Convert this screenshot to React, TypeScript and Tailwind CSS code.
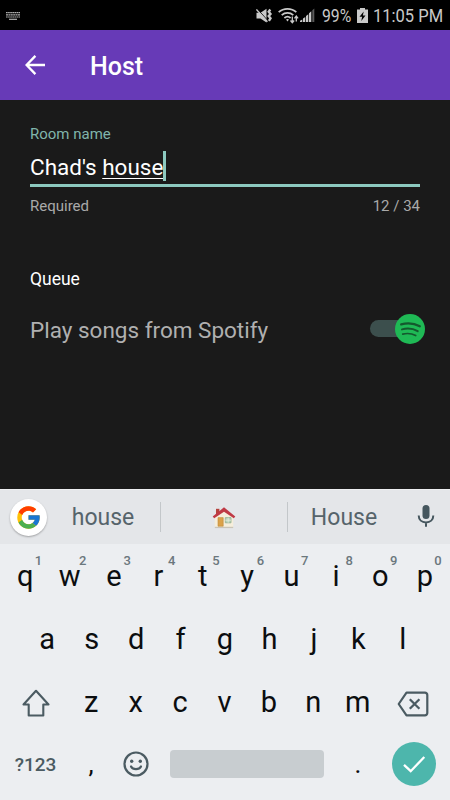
import React from 'react';
import { FcGoogle } from 'react-icons/fc';

const topRow = [
  ['q', '1'], ['w', '2'], ['e', '3'], ['r', '4'], ['t', '5'],
  ['y', '6'], ['u', '7'], ['i', '8'], ['o', '9'], ['p', '0'],
];
const homeRow = ['a', 's', 'd', 'f', 'g', 'h', 'j', 'k', 'l'];
const bottomRow = ['z', 'x', 'c', 'v', 'b', 'n', 'm'];

const StatusBar = () => {
  return (
    <div className="flex h-[30px] shrink-0 items-center justify-between bg-black pl-[6px] pr-[8px] text-[#c9c9c9]">
      <svg className="mt-[1px]" width="14" height="8" viewBox="0 0 14 8" fill="none" stroke="#b0b0b0">
        <path d="M0 .7h14" strokeDasharray="1.7 .4" strokeWidth="1.2" />
        <path d="M0 2.9h14" strokeDasharray="2 .4" strokeWidth="1.1" />
        <path d="M0 5h14" strokeDasharray="1.7 .4" strokeWidth="1.1" />
        <path d="M3 7.3h8" strokeWidth="1.2" />
      </svg>
      <div className="flex items-center">
        {/* sound off / vibrate */}
        <svg className="mt-[2px]" width="17" height="16" viewBox="0 0 17 16" fill="#c9c9c9">
          <path d="M.5 4.800h4L10.500.8v13.800l-6-4H.5z" />
          <path d="M1.300 1l11 12.200" stroke="#000" strokeWidth="1" />
          <path d="M.4 1.400l11 12.400" stroke="#c9c9c9" strokeWidth="1.400" />
          <path d="M14.300 1.500l-1.600 2.200 1.800 2.200-1.800 2.200 1.800 2.200-1.600 2.500" fill="none" stroke="#c9c9c9" strokeWidth="2.400" />
        </svg>
        {/* wifi */}
        <svg className="ml-[5px]" width="21" height="17" viewBox="0 0 21 17" fill="none" stroke="#c9c9c9">
          <path d="M.7 5.200C5.500.8 13.500.8 18.300 5.200M3.700 8.200c3.400-3 8.200-3 11.600 0M6.400 11c2-1.700 4.200-1.700 6.200 0" strokeWidth="1.800" />
          <path d="M8 12.600c1-.8 2-.8 3 0l-1.500 2z" fill="#c9c9c9" stroke="none" />
          <path d="M14.300 9.500v6M12.500 13.500l1.800 2.200 1.800-2.200M18.300 14.500v-5M16.500 11.300l1.800-2.200 1.800 2.200" strokeWidth="1.300" />
        </svg>
        {/* signal */}
        <svg className="ml-[1px]" width="15" height="15" viewBox="0 0 15 15" fill="#c9c9c9">
          <path d="M0 12.700l2.300-1.200V14H0zM3 10.600l2.300-1.600V14H3zM6 8l2.300-1.800V14H6zM9 5.200l2.300-1.900V14H9z" />
          <path d="M12.300 2.200L14.300.5V14h-2z" fill="#5a5a5a" />
        </svg>
        <div className="ml-[7px] w-[31px] text-[19px] leading-[30px]">
          <div className="w-max origin-left scale-x-[0.83] pt-[2px]">99%</div>
        </div>
        <svg className="ml-[4px] mt-[1px]" width="11" height="15" viewBox="0 0 11 15">
          <path d="M3 0h5v1.600h3V15H0V1.600h3z" fill="#c9c9c9" />
          <path d="M6.700 3.500L2.500 8.800h2.600L4.300 13l4.200-5.500H5.900z" fill="#000" />
        </svg>
        <div className="ml-[5px] w-[69px] text-[19px] leading-[30px]">
          <div className="w-max origin-left scale-x-[0.87] pt-[2px]">11:05 PM</div>
        </div>
      </div>
    </div>
  );
};

const SpotifySwitch = () => {
  return (
    <div className="-mr-[5px] mb-[3px] flex h-[30px] w-[55px] items-center">
      <div className="h-[17px] w-[36px] rounded-l-full bg-[#3c4f4d]"></div>
      <svg className="-ml-[11px] shrink-0" width="30" height="30" viewBox="0 0 30 30" fill="none" stroke="#14592e" strokeLinecap="round">
        <circle cx="15" cy="15" r="15" fill="#1fb955" stroke="none" />
        <path d="M6.200 10.400c6-1.600 12.800-1.200 18.600 1.800" strokeWidth="2.300" />
        <path d="M7 15.400c5.400-1.400 11-.9 15.700 1.800" strokeWidth="2" />
        <path d="M7.700 20.100c4.500-1.100 9-.7 13 1.500" strokeWidth="1.700" />
      </svg>
    </div>
  );
};

const HouseEmoji = () => {
  return (
    <svg width="24" height="24" viewBox="0 0 24 24">
      <path d="M4 2.800h3.400v6H4z" fill="#b5423d" />
      <path d="M2.800 11L12 3.500l9.200 7.500v10.500H2.800z" fill="#f6eedb" />
      <path d="M2.800 20.800h18.400v1.300H2.800z" fill="#c9c4b8" />
      <path d="M6 11.600h5.200v8.600H6z" fill="#dba24a" stroke="#c08a3a" strokeWidth=".6" />
      <path d="M13.300 11.600h5.700v5.200h-5.700z" fill="#b9d3bb" stroke="#8fae91" strokeWidth=".8" />
      <path d="M16.150 11.600v5.200M13.300 14.200H19" stroke="#eef2e4" strokeWidth=".7" />
      <path d="M12 1.300L.7 10.600l1.500 1.700L12 5.700l9.800 6.600 1.500-1.700z" fill="#bf3a45" />
    </svg>
  );
};

const Suggestions = () => {
  return (
    <div className="flex h-[55px] shrink-0 items-center border-t border-[#eeeff1] bg-[#e4e6e9] pl-[10px] text-[23px] text-[#56646b]">
      <div className="flex h-[37px] w-[37px] items-center justify-center rounded-full bg-white shadow-[0_1px_2px_rgba(0,0,0,0.3)]">
        <FcGoogle size={27} />
      </div>
      <div className="w-[113px] pr-[1px] pt-[2px] text-center">house</div>
      <div className="h-[30px] w-px bg-[#c3c7ca]"></div>
      <div className="flex w-[126px] justify-center pr-[1px] pt-[2px]"><HouseEmoji /></div>
      <div className="h-[30px] w-px bg-[#c3c7ca]"></div>
      <div className="w-[112px] pt-[2px] text-center">House</div>
      <svg className="ml-[17px]" width="18" height="24" viewBox="0 0 18 24">
        <rect x="5.500" y="0" width="7" height="14" rx="3.500" fill="#45565e" />
        <path d="M1.700 10.500c0 4.200 3.200 6.900 7.300 6.900s7.300-2.700 7.300-6.900M9 17.400v4.300" fill="none" stroke="#45565e" strokeWidth="2" />
      </svg>
    </div>
  );
};

const Keyboard = () => {
  return (
    <div className="flex h-[256px] shrink-0 flex-col bg-[#eceef1] text-[29px] text-[#0b0d0f]">
      <div className="grid h-[63px] grid-cols-10 px-[3px] leading-[65px]">
        {topRow.map(([letter, hint]) => (
          <div key={letter} className="relative text-center">
            {letter}
            <span className="absolute right-[2px] top-[9px] w-[14px] text-center text-[13px] font-medium leading-[16px] text-[#6b777d]">{hint}</span>
          </div>
        ))}
      </div>
      <div className="grid h-[63px] grid-cols-9 px-[25px] leading-[65px]">
        {homeRow.map((letter) => (
          <div key={letter} className="text-center">{letter}</div>
        ))}
      </div>
      <div className="flex h-[63px] items-center">
        <div className="flex w-[69px] justify-center pl-[2px] pt-[3px]">
          <svg width="28" height="28" viewBox="0 0 28 28" fill="none" stroke="#4b5b62" strokeWidth="2.100" strokeLinejoin="round">
            <path d="M14 1.800L1.500 15.500h5.200v11h14.600v-11h5.200z" />
          </svg>
        </div>
        <div className="grid h-[63px] w-[311px] grid-cols-7 leading-[65px]">
          {bottomRow.map((letter) => (
            <div key={letter} className="text-center">{letter}</div>
          ))}
        </div>
        <div className="flex flex-1 justify-center pr-[4px] pt-[5px]">
          <svg width="32" height="26" viewBox="0 0 32 26" fill="none" stroke="#4b5b62" strokeWidth="2.200" strokeLinejoin="round">
            <path d="M9.500 1.700h18.500a2.300 2.300 0 0 1 2.300 2.300v18a2.300 2.300 0 0 1-2.300 2.300H9.500L1.700 13z" />
            <path d="M12.800 8.200l9.600 9.600M22.400 8.200l-9.600 9.600" strokeWidth="2.300" />
          </svg>
        </div>
      </div>
      <div className="flex h-[63px] items-center leading-[63px]">
        <div className="w-[69px] pl-[2px] text-center text-[19px] font-medium text-[#4b5b62]">?123</div>
        <div className="w-[44px] text-center text-[26px]">,</div>
        <div className="-mt-[2px] flex w-[45px] justify-center">
          <svg width="26" height="26" viewBox="0 0 26 26" fill="none" stroke="#4b5b62" strokeWidth="2.200">
            <circle cx="13" cy="13" r="11.500" />
            <path d="M8 15.500c1.900 3.600 8.100 3.600 10 0" strokeLinecap="round" />
            <circle cx="8.700" cy="10.200" r="1.700" fill="#4b5b62" stroke="none" />
            <circle cx="17.300" cy="10.200" r="1.700" fill="#4b5b62" stroke="none" />
          </svg>
        </div>
        <div className="-mt-[2px] ml-[12px] h-[28px] w-[154px] rounded-[4px] bg-[#c8cdd0]"></div>
        <div className="ml-[12px] w-[44px] text-center text-[26px]">.</div>
        <div className="-mt-[2px] ml-[12px] flex h-[44px] w-[44px] items-center justify-center rounded-full bg-[#4db6ac]">
          <svg width="24" height="20" viewBox="0 0 24 20" fill="none" stroke="#fff" strokeWidth="2.300">
            <path d="M2 10.800l6.700 6.400L22.300 3" />
          </svg>
        </div>
      </div>
    </div>
  );
};

const App = () => {
  return (
    <div className="flex h-[800px] w-[450px] flex-col overflow-hidden bg-[#1a1a1a] font-['Roboto',sans-serif]">
      <StatusBar />
      <header className="flex h-[70px] shrink-0 items-center bg-[#673ab7] pl-[25px] text-white">
        <svg width="20" height="20" viewBox="0 0 20 20" fill="none" stroke="#fff" strokeWidth="2.300">
          <path d="M20 10H2M10.400 .9L1.600 10l8.800 9.100" />
        </svg>
        <h1 className="ml-[45px] pt-[3px] text-[25px] font-medium">Host</h1>
      </header>

      <main className="flex-1 px-[30px] pt-[24px]">
        <div className="text-[15px] leading-[20px] text-[#80b5ab]">Room name</div>
        <div className="mt-[7px] flex h-[36px] items-start border-b-[3px] border-[#8cc9bf] text-[22.500px] text-white">
          <span className="leading-[32px]">Chad's <span className="underline decoration-1 underline-offset-[3px]">house</span></span>
          <span className="h-[30px] w-[3px] bg-[#8cc9bf]"></span>
        </div>
        <div className="mt-[9px] flex justify-between text-[15px] leading-[20px] text-[#a9a9a9]">
          <span>Required</span>
          <span>12 / 34</span>
        </div>
        <h2 className="mt-[51px] text-[17.500px] leading-[24px] text-white">Queue</h2>
        <div className="mt-[22px] flex items-center justify-between">
          <span className="text-[22.500px] leading-[34px] text-[#b0b0b0]">Play songs from Spotify</span>
          <SpotifySwitch />
        </div>
      </main>

      <Suggestions />
      <Keyboard />
    </div>
  );
};

export default App;
